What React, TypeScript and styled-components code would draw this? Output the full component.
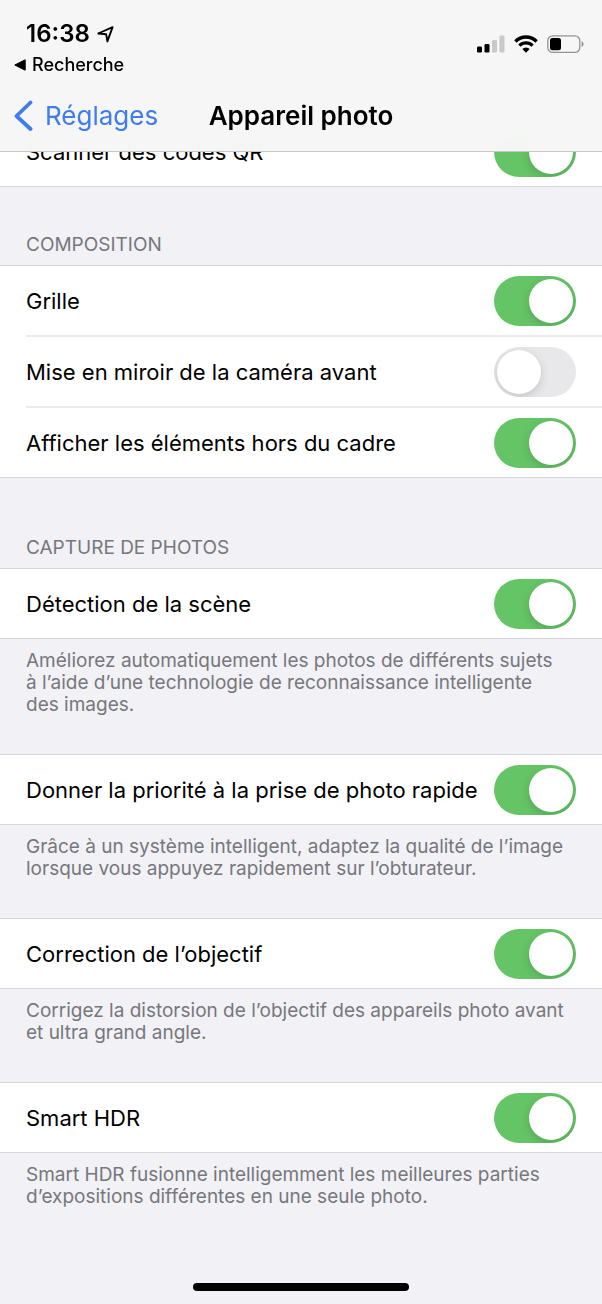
import React, { useState } from "react";
import styled, { createGlobalStyle } from "styled-components";

const GlobalStyle = createGlobalStyle`
  * { box-sizing: border-box; }
  body {
    margin: 0;
    background: #f1f1f6;
    color: #000;
    font-family: Inter, "Liberation Sans", sans-serif;
  }
`;

const Screen = styled.div`
  display: flex;
  flex-direction: column;
  min-height: 100vh;
  background: #f1f1f6;
`;

const Header = styled.header`
  position: sticky;
  top: 0;
  z-index: 1;
  background: rgba(246, 246, 246, 0.98);
  backdrop-filter: blur(20px);
  border-bottom: 1px solid #c6c6c9;
`;

const StatusBar = styled.div`
  display: flex;
  justify-content: space-between;
  align-items: center;
  height: 80px;
  padding: 18px 18px 0 14px;
`;

const StatusLeft = styled.div`
  display: flex;
  flex-direction: column;
`;

const Clock = styled.div`
  display: flex;
  align-items: center;
  gap: 7px;
  padding-left: 12px;
  font-size: 24px;
  font-weight: 600;
  line-height: 32px;
`;

const ReturnLink = styled.a`
  display: flex;
  align-items: center;
  gap: 6px;
  color: #000;
  font-size: 18px;
  font-weight: 500;
  line-height: 30px;
  text-decoration: none;
`;

const StatusIcons = styled.div`
  display: flex;
  align-items: center;
  gap: 9px;
  padding-bottom: 10px;
`;

const NavBar = styled.nav`
  display: grid;
  grid-template-columns: 1fr auto 1fr;
  align-items: center;
  height: 71px;
  padding: 0 14px;
`;

const BackLink = styled.a`
  display: flex;
  align-items: center;
  gap: 12px;
  color: #3e7cf0;
  font-size: 26px;
  line-height: 32px;
  text-decoration: none;
`;

const Title = styled.h1`
  margin: 0;
  font-size: 26px;
  font-weight: 600;
  line-height: 32px;
`;

const Content = styled.main`
  margin-top: -36px;
`;

const Section = styled.section<{ $gap: number }>`
  margin-bottom: ${(p) => p.$gap}px;
`;

const SectionTitle = styled.h2`
  margin: 0;
  padding: 0 26px 8px;
  color: #77777c;
  font-size: 19px;
  font-weight: 400;
  line-height: 24px;
  text-transform: uppercase;
`;

const Group = styled.div`
  background: #fff;
  border-top: 1px solid #d6d6da;
  border-bottom: 1px solid #d6d6da;
`;

const Row = styled.label`
  display: flex;
  align-items: center;
  justify-content: space-between;
  min-height: 69px;
  margin-left: 26px;
  padding-right: 26px;
  font-size: 22px;
  line-height: 28px;

  & + & {
    min-height: 71px;
    border-top: 2px solid #ebebed;
  }
`;

const Toggle = styled.input`
  appearance: none;
  flex: none;
  width: 82px;
  height: 50px;
  margin: 0;
  padding: 3px;
  border-radius: 25px;
  background: #e8e8ea;
  overflow: hidden;

  &::before {
    content: "";
    display: block;
    width: 44px;
    height: 44px;
    border-radius: 50%;
    background: #fff;
    box-shadow: 0 3px 10px rgba(0, 0, 0, 0.16);
  }

  &:checked {
    background: #65c466;
  }

  &:checked::before {
    margin-left: auto;
  }
`;

const Note = styled.p`
  margin: 0;
  padding: 11px 26px 0;
  color: #77777c;
  font-size: 19px;
  line-height: 22px;
`;

const HomeIndicator = styled.div`
  width: 36%;
  height: 8px;
  margin: auto auto 13px;
  border-radius: 4px;
  background: #000;
`;

function LocationIcon() {
  return (
    <svg width="17" height="17" viewBox="0 0 17 17" fill="none" aria-hidden="true">
      <path d="M1.2 7.5 L15.6 1.2 L10.4 15.4 L9.2 8.3 Z" stroke="#000" strokeWidth="1.9" strokeLinejoin="round" />
    </svg>
  );
}

function ReturnArrow() {
  return (
    <svg width="12" height="12" viewBox="0 0 12 12" aria-hidden="true">
      <path d="M0.8 6 L11.2 0.8 V11.2 Z" stroke="#000" strokeWidth="1" strokeLinejoin="round" />
    </svg>
  );
}

function BackChevron() {
  return (
    <svg width="19" height="32" viewBox="0 0 19 32" fill="none" aria-hidden="true">
      <path d="M16.5 2.5 L2.5 16 L16.5 29" stroke="#3e7cf0" strokeWidth="3.8" strokeLinecap="round" strokeLinejoin="round" />
    </svg>
  );
}

function SignalIcon() {
  return (
    <svg width="28" height="18" viewBox="0 0 28 18" role="img" aria-label="Signal">
      <rect x="0" y="11.5" width="5" height="6" rx="1.3" />
      <rect x="7.5" y="9" width="5" height="8.5" rx="1.3" />
      <rect x="15" y="5" width="5" height="12.5" rx="1.3" fill="#c9c9c9" />
      <rect x="22.5" y="0.5" width="5" height="17" rx="1.3" fill="#c9c9c9" />
    </svg>
  );
}

function WifiIcon() {
  return (
    <svg width="24" height="18" viewBox="0 0 24 18" fill="none" role="img" aria-label="Wi-Fi">
      <path d="M1.4 6.4 A15.2 15.2 0 0 1 22.6 6.4" stroke="#000" strokeWidth="3.5" />
      <path d="M5.4 10.6 A9.5 9.5 0 0 1 18.6 10.6" stroke="#000" strokeWidth="3.3" />
      <path d="M12 17.8 L8.3 14.1 A5.3 5.3 0 0 1 15.7 14.1 Z" fill="#000" />
    </svg>
  );
}

function BatteryIcon() {
  return (
    <svg width="37" height="18" viewBox="0 0 37 18" role="img" aria-label="Batterie">
      <rect x="0.8" y="0.8" width="32" height="16.6" rx="5" fill="none" stroke="#949494" strokeWidth="1.3" />
      <rect x="3" y="3" width="11" height="12.2" rx="2.5" />
      <path d="M34.6 6.2 C37.2 7 37.2 11.2 34.6 12 Z" fill="#949494" />
    </svg>
  );
}

function Setting({ label, on = true }: { label: string; on?: boolean }) {
  const [checked, setChecked] = useState(on);
  return (
    <Row>
      <span>{label}</span>
      <Toggle type="checkbox" role="switch" checked={checked} onChange={() => setChecked(!checked)} />
    </Row>
  );
}

export default function App() {
  return (
    <Screen>
      <GlobalStyle />
      <Header>
        <StatusBar>
          <StatusLeft>
            <Clock>
              16:38
              <LocationIcon />
            </Clock>
            <ReturnLink href="#recherche">
              <ReturnArrow />
              Recherche
            </ReturnLink>
          </StatusLeft>
          <StatusIcons>
            <SignalIcon />
            <WifiIcon />
            <BatteryIcon />
          </StatusIcons>
        </StatusBar>
        <NavBar>
          <BackLink href="#reglages">
            <BackChevron />
            Réglages
          </BackLink>
          <Title>Appareil photo</Title>
        </NavBar>
      </Header>
      <Content>
        <Section $gap={46}>
          <Group>
            <Setting label="Scanner des codes QR" />
          </Group>
        </Section>
        <Section $gap={58}>
          <SectionTitle>Composition</SectionTitle>
          <Group>
            <Setting label="Grille" />
            <Setting label="Mise en miroir de la caméra avant" on={false} />
            <Setting label="Afficher les éléments hors du cadre" />
          </Group>
        </Section>
        <Section $gap={38}>
          <SectionTitle>Capture de photos</SectionTitle>
          <Group>
            <Setting label="Détection de la scène" />
          </Group>
          <Note>
            Améliorez automatiquement les photos de différents sujets
            <br />à l’aide d’une technologie de reconnaissance intelligente
            <br />
            des images.
          </Note>
        </Section>
        <Section $gap={38}>
          <Group>
            <Setting label="Donner la priorité à la prise de photo rapide" />
          </Group>
          <Note>
            Grâce à un système intelligent, adaptez la qualité de l’image
            <br />
            lorsque vous appuyez rapidement sur l’obturateur.
          </Note>
        </Section>
        <Section $gap={38}>
          <Group>
            <Setting label="Correction de l’objectif" />
          </Group>
          <Note>
            Corrigez la distorsion de l’objectif des appareils photo avant
            <br />
            et ultra grand angle.
          </Note>
        </Section>
        <Section $gap={38}>
          <Group>
            <Setting label="Smart HDR" />
          </Group>
          <Note>
            Smart HDR fusionne intelligemment les meilleures parties
            <br />
            d’expositions différentes en une seule photo.
          </Note>
        </Section>
      </Content>
      <HomeIndicator />
    </Screen>
  );
}
